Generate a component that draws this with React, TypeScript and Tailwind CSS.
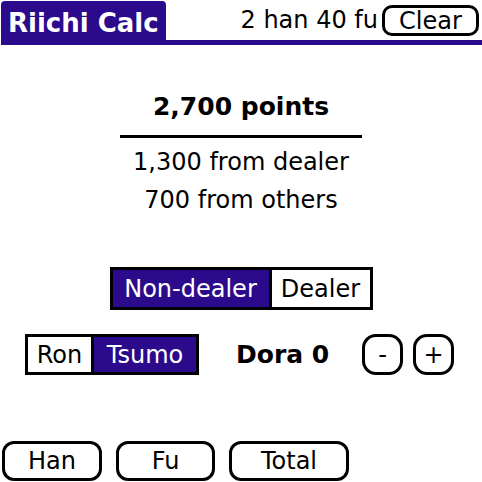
import { useState } from "react";

type Payment = {
  total: number;
  lines: string[];
};

const roundUp = (n: number) => Math.ceil(n / 100) * 100;
const fmt = (n: number) => n.toLocaleString("en-US");

// basic points = fu * 2^(han + 2), capped at mangan
function calcPayment(han: number, fu: number, dealer: boolean, tsumo: boolean): Payment {
  const base = Math.min(fu * 2 ** (han + 2), 2000);

  if (!tsumo) {
    const total = roundUp(base * (dealer ? 6 : 4));
    return { total, lines: [`${fmt(total)} from discarder`] };
  }

  if (dealer) {
    const each = roundUp(base * 2);
    return { total: each * 3, lines: [`${fmt(each)} from all`] };
  }

  const fromDealer = roundUp(base * 2);
  const fromOthers = roundUp(base);
  return {
    total: fromDealer + fromOthers * 2,
    lines: [`${fmt(fromDealer)} from dealer`, `${fmt(fromOthers)} from others`],
  };
}

function PalmButton({
  label,
  onClick,
  className = "",
}: {
  label: string;
  onClick?: () => void;
  className?: string;
}) {
  return (
    <button
      onClick={onClick}
      className={`flex items-center justify-center border-[3px] border-black bg-white text-[24px] leading-none text-black ${className}`}
    >
      {label}
    </button>
  );
}

export default function App() {
  const [han, setHan] = useState(2);
  const [fu, setFu] = useState(40);
  const [dealer, setDealer] = useState(false);
  const [tsumo, setTsumo] = useState(true);
  const [dora, setDora] = useState(0);

  const payment = calcPayment(han + dora, fu, dealer, tsumo);

  const clearAll = () => {
    setHan(1);
    setFu(30);
    setDora(0);
  };

  return (
    <div className="h-[482px] w-[482px] overflow-hidden bg-white font-['DejaVu_Sans',sans-serif] text-black">
      {/* Title bar */}
      <div className="flex items-end">
        <div className="ml-[1px] mt-[1px] h-[44px] w-[165px] rounded-t-[4px] bg-[#2b0b8c] pl-[7px] text-[26px] font-bold leading-[44px] text-white">
          Riichi Calc
        </div>
        <div className="flex flex-1 flex-col">
          <div className="flex h-[39px] items-start justify-end gap-[4px] pr-[3px] pt-[4px]">
            <span className="text-[24px] leading-[31px]">
              {han} han {fu} fu
            </span>
            <PalmButton label="Clear" onClick={clearAll} className="h-[31px] w-[97px] rounded-[10px]" />
          </div>
          <div className="h-[5px] bg-[#2b0b8c]" />
        </div>
      </div>

      {/* Result */}
      <div className="mt-[47px] flex flex-col items-center">
        <div className="text-[25px] font-bold leading-[29px]">{fmt(payment.total)} points</div>
        <div className="mt-[14px] h-[3px] w-[242px] bg-black" />
        <div className="mt-[5px] flex flex-col items-center text-[24px] leading-[38px]">
          {payment.lines.map((line) => (
            <div key={line}>{line}</div>
          ))}
        </div>
      </div>

      {/* Dealer toggle */}
      <div className="mx-auto mt-[48px] flex h-[43px] w-[263px] border-[3px] border-black text-[24px]">
        <button
          onClick={() => setDealer(false)}
          className={`w-[156px] ${dealer ? "bg-white text-black" : "bg-[#2b0b8c] text-white"}`}
        >
          Non-dealer
        </button>
        <button
          onClick={() => setDealer(true)}
          className={`w-[101px] border-l-[3px] border-black ${dealer ? "bg-[#2b0b8c] text-white" : "bg-white text-black"}`}
        >
          Dealer
        </button>
      </div>

      {/* Win type + dora */}
      <div className="mt-[24px] flex items-center pl-[25px]">
        <div className="flex h-[41px] w-[174px] border-[3px] border-black text-[24px]">
          <button
            onClick={() => setTsumo(false)}
            className={`w-[63px] ${tsumo ? "bg-white text-black" : "bg-[#2b0b8c] text-white"}`}
          >
            Ron
          </button>
          <button
            onClick={() => setTsumo(true)}
            className={`w-[105px] border-l-[3px] border-black ${tsumo ? "bg-[#2b0b8c] text-white" : "bg-white text-black"}`}
          >
            Tsumo
          </button>
        </div>
        <span className="ml-[37px] w-[126px] text-[25px] font-bold">Dora {dora}</span>
        <div className="flex gap-[10px]">
          <PalmButton
            label="-"
            onClick={() => setDora(Math.max(0, dora - 1))}
            className="h-[41px] w-[41px] rounded-[14px]"
          />
          <PalmButton label="+" onClick={() => setDora(dora + 1)} className="h-[41px] w-[41px] rounded-[14px]" />
        </div>
      </div>

      {/* Bottom buttons */}
      <div className="mt-[66px] flex gap-[14px] pl-[2px]">
        <PalmButton
          label="Han"
          onClick={() => setHan(han >= 4 ? 1 : han + 1)}
          className="h-[40px] w-[100px] rounded-[12px]"
        />
        <PalmButton
          label="Fu"
          onClick={() => setFu(fu >= 110 ? 20 : fu + 10)}
          className="h-[40px] w-[99px] rounded-[12px]"
        />
        <PalmButton label="Total" className="h-[40px] w-[120px] rounded-[12px]" />
      </div>
    </div>
  );
}
